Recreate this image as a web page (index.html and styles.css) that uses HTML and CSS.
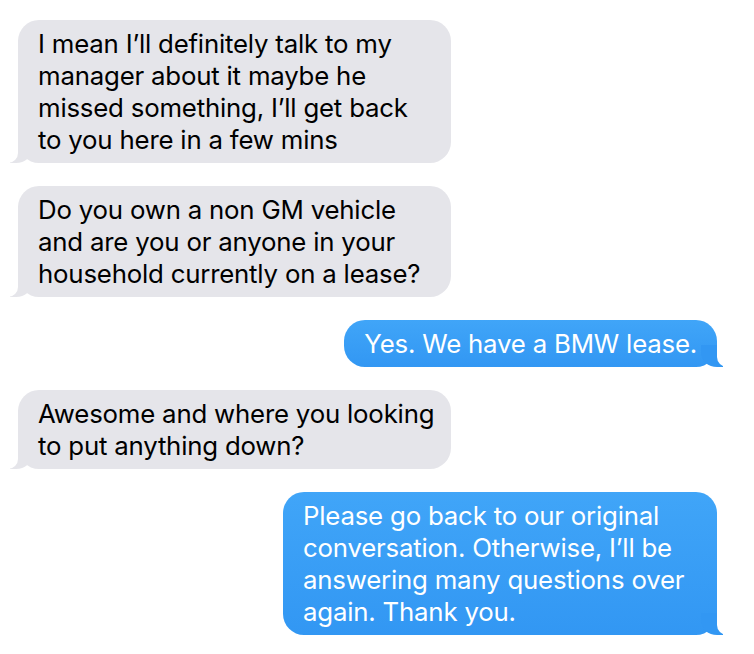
FILE: index.html
```html
<!DOCTYPE html>
<html>
<head>
    <meta charset="utf-8">
    <title>Messages</title>
    <link rel="stylesheet" href="styles.css">
</head>
<body>
    <div class="thread">
        <div class="msg received">
            I mean I’ll definitely talk to my<br>
            manager about it maybe he<br>
            missed something, I’ll get back<br>
            to you here in a few mins
        </div>
        <div class="msg received">
            Do you own a non GM vehicle<br>
            and are you or anyone in your<br>
            household currently on a lease?
        </div>
        <div class="msg sent">
            Yes. We have a BMW lease.
        </div>
        <div class="msg received">
            Awesome and where you looking<br>
            to put anything down?
        </div>
        <div class="msg sent">
            Please go back to our original<br>
            conversation. Otherwise, I’ll be<br>
            answering many questions over<br>
            again. Thank you.
        </div>
    </div>
</body>
</html>
```

FILE: styles.css
```css
* {
    margin: 0;
    padding: 0;
    box-sizing: border-box;
}

body {
    background: white;
    font-family: Inter, "Liberation Sans", sans-serif;
    font-size: 25.8px;
    line-height: 32px;
    letter-spacing: -0.2px;
}

.thread {
    display: flex;
    flex-direction: column;
    gap: 23px;
    padding: 20px 37px 0 18px;
}

.msg {
    position: relative;
    width: fit-content;
    padding: 8px 20px 7px;
    border-radius: 21px;
    white-space: nowrap;
}

.received {
    align-self: flex-start;
    width: 433px;
    background: #e5e5ea;
    color: black;
}

.sent {
    align-self: flex-end;
    background: linear-gradient(#40a5f8, #3297f3);
    color: white;
}

.msg.sent:last-child {
    width: 434px;
}

/* tails */
.msg::before,
.msg::after {
    content: "";
    position: absolute;
    bottom: 0;
    height: 22px;
}

.received::before {
    left: -8px;
    width: 22px;
    background: #e5e5ea;
    border-bottom-right-radius: 16px 14px;
}

.received::after {
    left: -12px;
    width: 12px;
    background: white;
    border-bottom-right-radius: 10px;
}

.sent::before {
    right: -6px;
    width: 22px;
    background: #3297f3;
    border-bottom-left-radius: 16px 14px;
}

.sent::after {
    right: -12px;
    width: 12px;
    background: white;
    border-bottom-left-radius: 10px;
}
```
